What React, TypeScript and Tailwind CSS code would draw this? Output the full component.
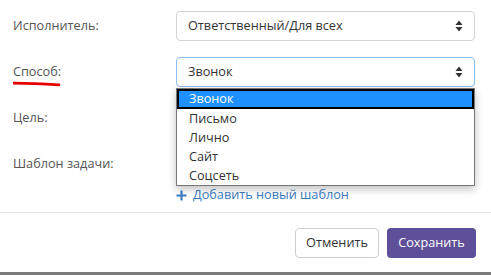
import React from 'react'

const SortIcon = () => (
  <svg width="8" height="12" viewBox="0 0 8 12" className="shrink-0">
    <path d="M4 0.5 L7.5 5 L0.5 5 Z" fill="#333" />
    <path d="M4 11.5 L7.5 7 L0.5 7 Z" fill="#333" />
  </svg>
)

const options = ['Звонок', 'Письмо', 'Лично', 'Сайт', 'Соцсеть']

function FakeSelect({ value, focused }: { value: string; focused?: boolean }) {
  return (
    <div
      className={
        'h-[30px] w-full rounded-[4px] border bg-white flex items-center justify-between pl-[11px] pr-[11px] text-[12.7px] text-[#333] ' +
        (focused ? 'border-[#8ebcf0]' : 'border-[#d4d4d8]')
      }
    >
      <span>{value}</span>
      <SortIcon />
    </div>
  )
}

export default function App() {
  return (
    <div className="relative w-[491px] h-[275px] bg-white border-b-[3px] border-[#7a7a7a] font-['Open_Sans',sans-serif] text-[#555] overflow-hidden">
      <div className="pt-[11px] pl-[13px] pr-[16px] flex flex-col gap-4">
        {/* Исполнитель */}
        <div className="flex items-center">
          <div className="w-[163px] text-[12.7px]">Исполнитель:</div>
          <div className="flex-1">
            <FakeSelect value="Ответственный/Для всех" />
          </div>
        </div>

        {/* Способ */}
        <div className="flex items-center">
          <div className="w-[163px] text-[12.7px] relative">
            Способ:
            <svg width="50" height="6" viewBox="0 0 50 6" className="absolute left-0 top-[19px]">
              <path d="M0.5 2.2 Q20 2.6 46 3.8" stroke="#e50000" strokeWidth="2.8" fill="none" strokeLinecap="round" />
            </svg>
          </div>
          <div className="flex-1 relative z-10">
            <FakeSelect value="Звонок" focused />
            {/* открытый список */}
            <div className="absolute left-0 top-[31px] w-full bg-white border border-[#767676] shadow-[0_3px_8px_rgba(0,0,0,0.25)] text-[12.7px] text-[#333]">
              {options.map((o, i) => (
                <div
                  key={o}
                  className={
                    i === 0
                      ? 'h-[20px] flex items-center pl-[10px] bg-[#1e90ff] text-white border-2 border-black'
                      : 'h-[19px] flex items-center pl-[12px]'
                  }
                >
                  {o}
                </div>
              ))}
            </div>
          </div>
        </div>

        {/* Цель */}
        <div className="flex items-center">
          <div className="w-[163px] text-[12.7px]">Цель:</div>
          <div className="flex-1">
            <FakeSelect value="" />
          </div>
        </div>

        {/* Шаблон задачи */}
        <div className="flex items-center">
          <div className="w-[163px] text-[12.7px]">Шаблон задачи:</div>
          <div className="flex-1">
            <FakeSelect value="" />
          </div>
        </div>
      </div>

      <div className="pl-[176px] mt-[7px] h-[18px] flex items-center gap-[6px] text-[12.7px] text-[#3a7bc0]">
        <svg width="11" height="11" viewBox="0 0 11 11">
          <path d="M5.5 0.5 V10.5 M0.5 5.5 H10.5" stroke="#3a7bc0" strokeWidth="2.2" />
        </svg>
        <span>Добавить новый шаблон</span>
      </div>

      <div className="mt-[8px] border-t border-[#e3e3e8]" />

      <div className="flex justify-end gap-2 pt-[15px] pr-[15px]">
        <button className="h-[30px] w-[84px] rounded-[4px] border border-[#cfcfcf] bg-white text-[12.7px] text-[#333]">
          Отменить
        </button>
        <button className="h-[30px] w-[89px] rounded-[4px] bg-[#5e4f99] text-[12.7px] text-white">
          Сохранить
        </button>
      </div>
    </div>
  )
}
